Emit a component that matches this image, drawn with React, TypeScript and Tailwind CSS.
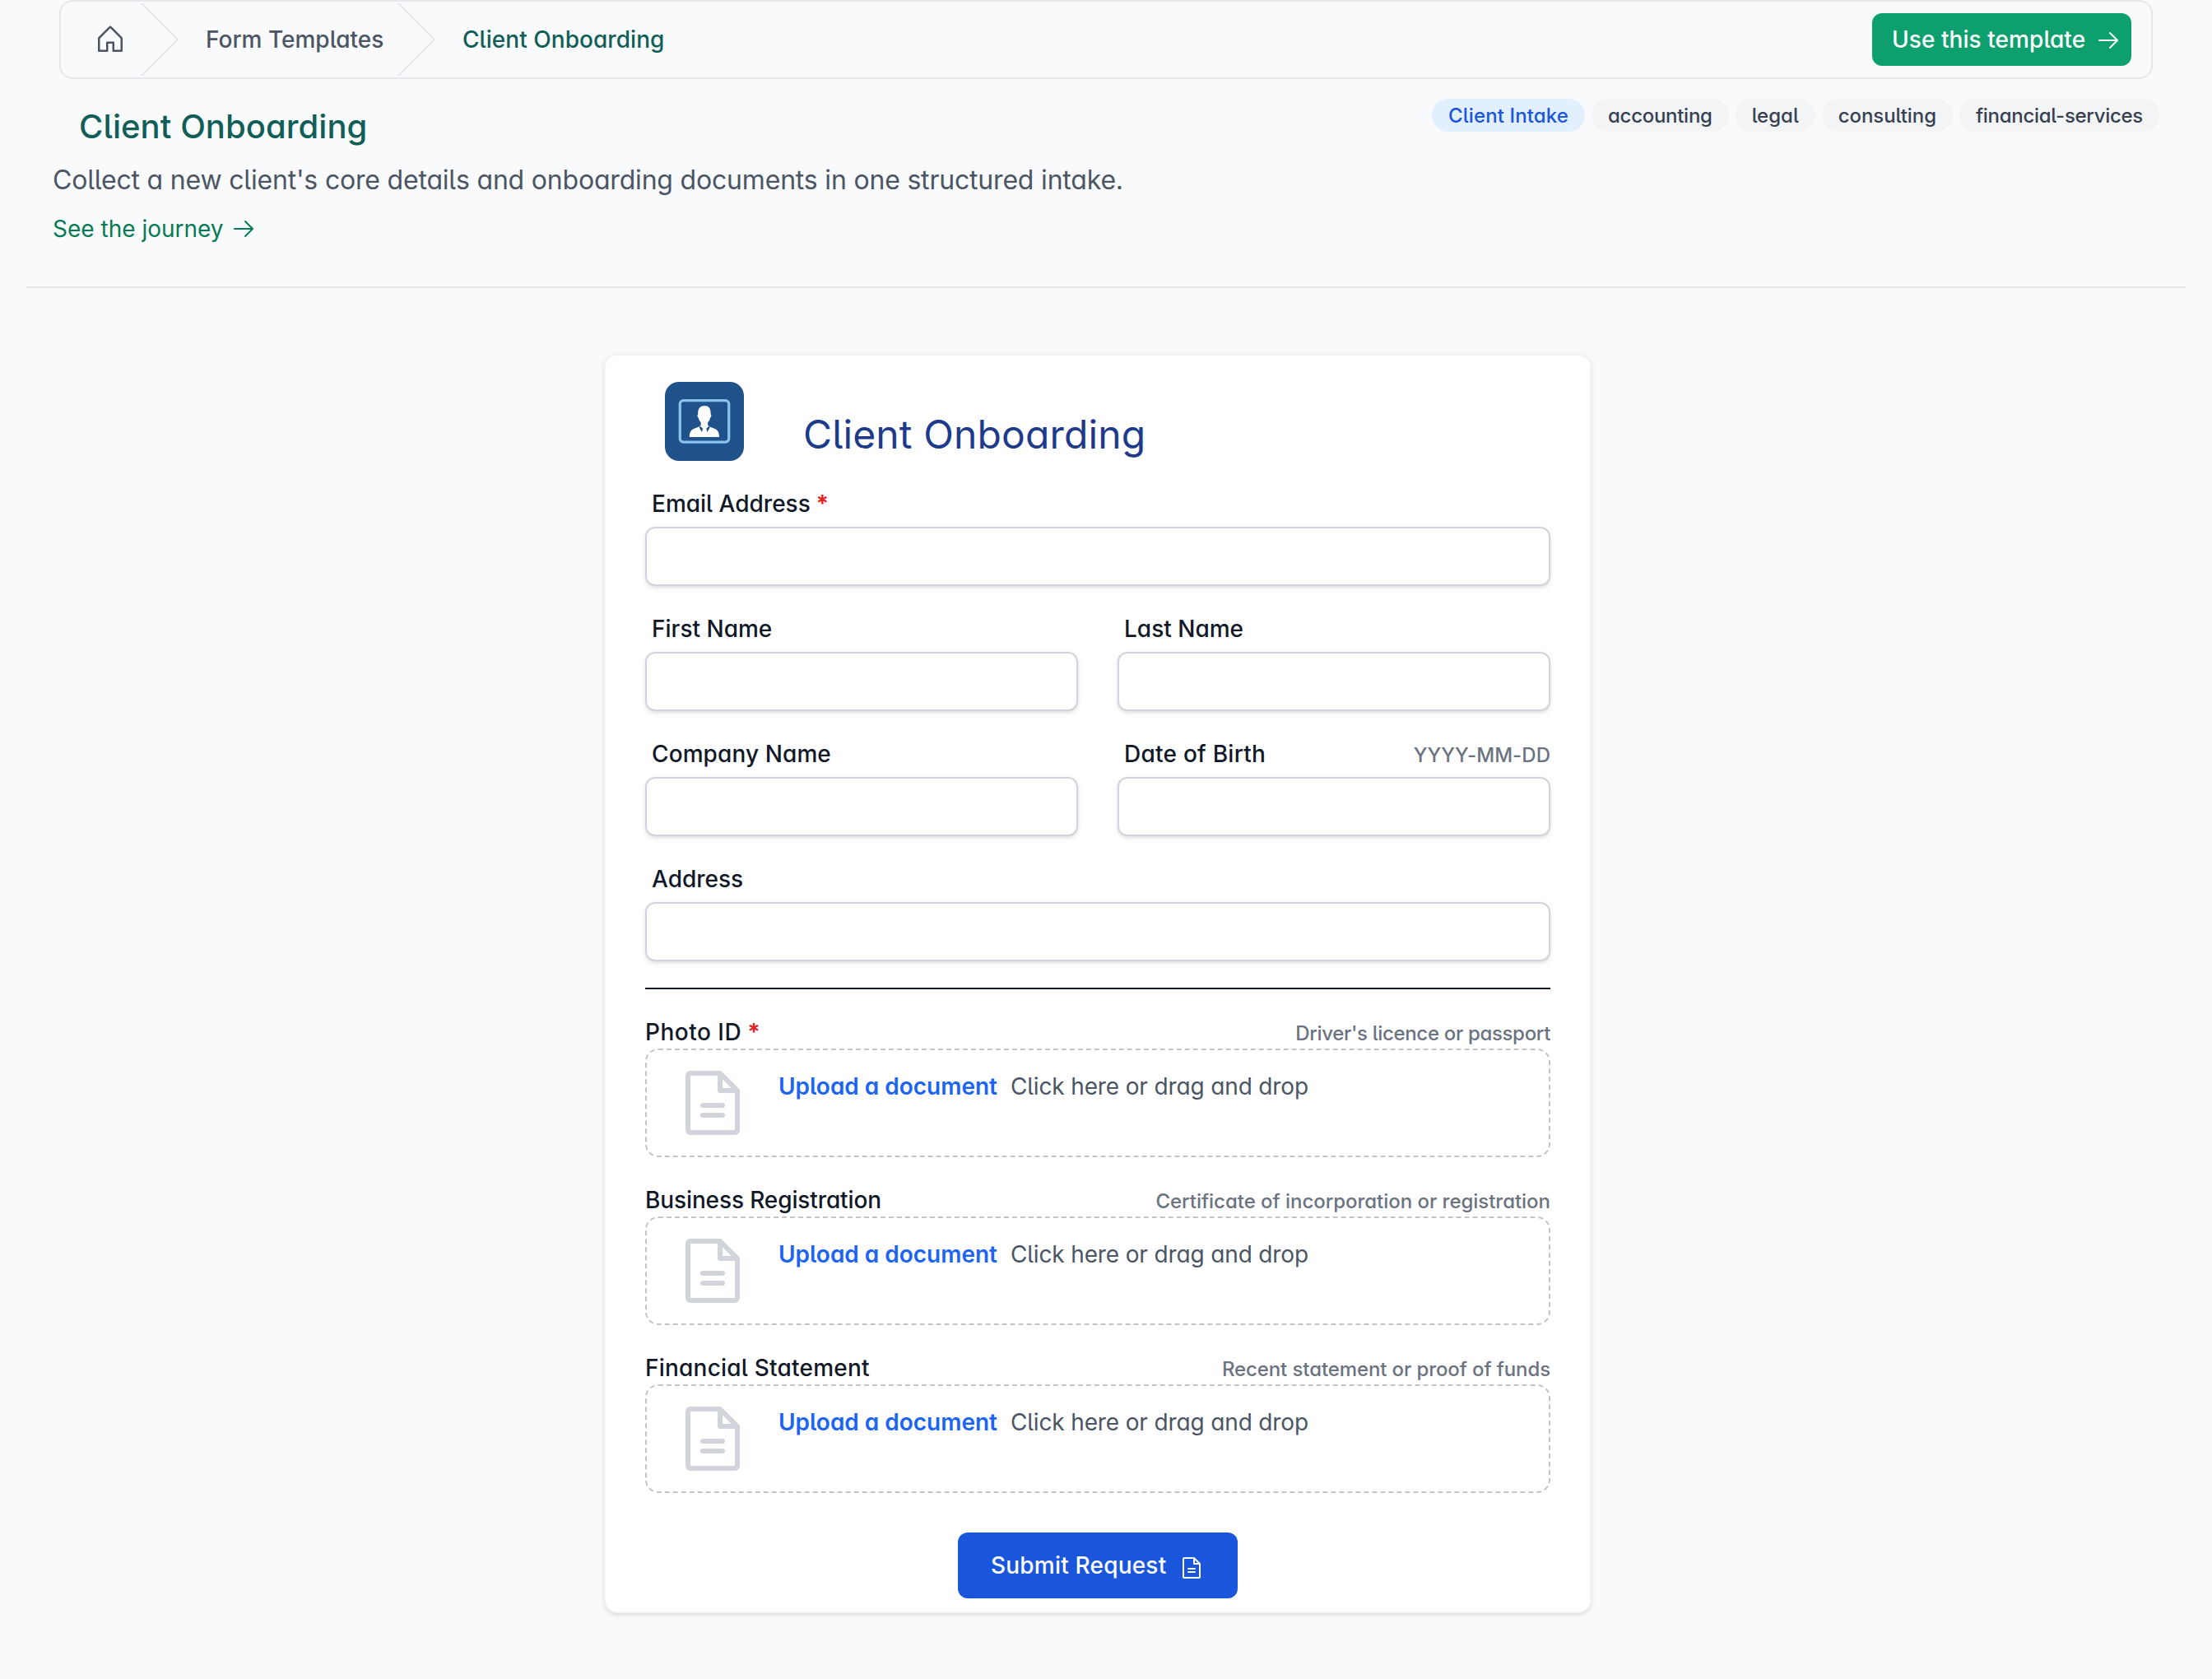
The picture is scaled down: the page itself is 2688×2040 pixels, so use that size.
import clsx from "clsx";
import { PiArrowRight, PiFileText, PiHouse } from "react-icons/pi";

interface IFieldProps {
  label: string;
  tracking?: string;
  required?: boolean;
  hint?: string;
}

interface IUploadProps extends IFieldProps {
  hint: string;
  hintTracking: string;
}

const tags = [
  { label: "Client Intake", className: "bg-[#e1effe] text-[#1a56db] tracking-[0.12px]" },
  { label: "accounting", className: "bg-gray-100 text-[#374151] tracking-[-0.28px]" },
  { label: "legal", className: "bg-gray-100 text-[#374151]" },
  { label: "consulting", className: "bg-gray-100 text-[#374151] tracking-[-0.08px]" },
  { label: "financial-services", className: "bg-gray-100 text-[#374151] tracking-[-0.29px]" },
];

const uploads: IUploadProps[] = [
  {
    label: "Photo ID",
    tracking: "tracking-[0.5px]",
    required: true,
    hint: "Driver's licence or passport",
    hintTracking: "tracking-[-0.33px]",
  },
  {
    label: "Business Registration",
    tracking: "tracking-[-0.12px]",
    hint: "Certificate of incorporation or registration",
    hintTracking: "tracking-[-0.03px]",
  },
  {
    label: "Financial Statement",
    tracking: "tracking-[0.22px]",
    hint: "Recent statement or proof of funds",
    hintTracking: "tracking-[-0.1px]",
  },
];

function Chevron() {
  return (
    <svg className="h-[88px] w-12 shrink-0 text-[#e5e7eb]" viewBox="0 0 24 44" fill="currentColor">
      <path d="M.293 0l22 22-22 22h1.414l22-22-22-22H.293z" />
    </svg>
  );
}

function Logo() {
  return (
    <svg className="size-24 shrink-0" viewBox="0 0 96 96">
      <rect width="96" height="96" rx="17" fill="#1f528b" />
      <rect x="18.3" y="22.7" width="59.4" height="50.4" rx="4" fill="none" stroke="#8ac2ec" strokeWidth="3.3" />
      <path
        fill="#fff"
        d="M48.5 29c-5.6 0-8.7 3.6-8.3 10.2-1.2.4-.9 3.4.5 4.2.5 2.6 1.7 4.6 3 6v3.1c-1.2 1.5-3.2 2.4-6.2 3.4-5.4 1.9-7.7 4.1-7.7 11.1h36.2c0-7-2.3-9.2-7.700-11.100-3-1-5-1.900-6.200-3.400v-3.100c1.300-1.400 2.500-3.400 3-6 1.400-.8 1.700-3.800.5-4.200.4-6.600-2.300-10.200-7.100-10.200z"
      />
      <path fill="#1f528b" d="M42.6 53.5l3.5 3.2-1.1 4.3-3.3-5.5zM53.8 53.5l-3.5 3.2 1.1 4.3 3.3-5.5z" />
    </svg>
  );
}

function Label({ label, tracking, required }: IFieldProps) {
  return (
    <span className={clsx("text-[28px] font-medium text-[#111827]", tracking)}>
      {label}
      {required && <span className="font-bold text-[#e02424]"> *</span>}
    </span>
  );
}

function Hint({ text, tracking }: { text: string; tracking: string }) {
  return <span className={clsx("pt-1 text-2xl font-medium leading-9 text-[#6b7280]", tracking)}>{text}</span>;
}

function Field({ label, tracking, required, hint }: IFieldProps) {
  return (
    <div className="flex flex-1 flex-col gap-2">
      <div className="flex h-10 items-center justify-between pl-2 leading-10">
        <Label label={label} tracking={tracking} required={required} />
        {hint && <Hint text={hint} tracking="tracking-[0.05px]" />}
      </div>
      <input className="h-[72px] w-full rounded-xl border-2 border-[#d1d5db] bg-white px-4 shadow-[0_2px_6px_rgba(0,0,0,0.1),0_2px_4px_-2px_rgba(0,0,0,0.1)]" />
    </div>
  );
}

function Upload({ label, tracking, required, hint, hintTracking }: IUploadProps) {
  return (
    <div>
      <div className="flex h-10 items-center justify-between leading-10">
        <Label label={label} tracking={tracking} required={required} />
        <Hint text={hint} tracking={hintTracking} />
      </div>
      <div className="flex h-[132px] gap-8 rounded-2xl border-2 border-dashed border-[#c3c4c8] pl-8 pt-4">
        <PiFileText className="size-24 text-[#d1d5db]" />
        <p className="flex gap-4 pt-2 text-[28px] leading-10">
          <span className="font-semibold tracking-[-0.02px] text-[#1c64f2]">Upload a document</span>
          <span className="tracking-[-0.14px] text-[#4b5563]">Click here or drag and drop</span>
        </p>
      </div>
    </div>
  );
}

export default function App() {
  return (
    <div className="h-[2040px] w-[2688px] overflow-hidden bg-[#f9fafb] px-8 font-['Inter',sans-serif] [font-feature-settings:'cv05','cv11']">
      <nav className="mx-10 flex h-24 items-center rounded-2xl border-2 border-[#e5e7eb] pl-10 pr-6 text-[28px] font-medium leading-10">
        <PiHouse className="mr-4 size-10 text-[#4b5563]" />
        <Chevron />
        <span className="ml-8 mr-4 w-[216px] whitespace-nowrap text-[#4b5563]">Form Templates</span>
        <Chevron />
        <span className="ml-8 tracking-[0.05px] text-[#115e59]">Client Onboarding</span>
        <button className="ml-auto flex h-16 w-[315px] items-center justify-between rounded-xl bg-[#0e9f6e] pl-6 pr-3 tracking-[0.06px] text-white">
          Use this template
          <PiArrowRight className="mt-0.5 size-8" />
        </button>
      </nav>

      <header className="flex h-[254px] justify-between border-b-2 border-[#e5e7eb] px-8">
        <div className="flex flex-col items-start pt-[30px]">
          <h1 className="pl-8 text-[40px] font-medium leading-[56px] tracking-[0.06px] text-[#115e59]">
            Client Onboarding
          </h1>
          <p className="mt-[9px] text-[32px] leading-[56px] tracking-[-0.19px] text-[#4b5563]">
            Collect a new client's core details and onboarding documents in one structured intake.
          </p>
          <a className="mt-[11px] flex items-center gap-2 text-[28px] leading-10 text-[#057a55]">
            See the journey
            <PiArrowRight className="size-8" />
          </a>
        </div>
        <div className="flex gap-2 pt-6">
          {tags.map((tag) => (
            <span
              key={tag.label}
              className={clsx("h-10 rounded-full px-5 text-2xl font-medium leading-[41px]", tag.className)}
            >
              {tag.label}
            </span>
          ))}
        </div>
      </header>

      <main className="ml-[702px] mt-20 h-[1530px] w-[1200px] rounded-2xl border-2 border-[#f3f4f6] bg-white px-12 pt-8 shadow-[0_2px_6px_rgba(0,0,0,0.1),0_2px_4px_-2px_rgba(0,0,0,0.1)]">
        <div className="flex h-24 gap-[72px] pl-6">
          <Logo />
          <h2 className="pt-8 text-[48px] leading-[64px] tracking-[0.12px] text-[#1e3a8a]">Client Onboarding</h2>
        </div>
        <div className="mt-8 flex flex-col gap-8">
          <Field label="Email Address" required />
          <div className="flex gap-12">
            <Field label="First Name" />
            <Field label="Last Name" />
          </div>
          <div className="flex gap-12">
            <Field label="Company Name" tracking="tracking-[0.1px]" />
            <Field label="Date of Birth" tracking="tracking-[0.25px]" hint="YYYY-MM-DD" />
          </div>
          <Field label="Address" />
          <hr className="border-t-2 border-[#111827]" />
          {uploads.map((upload) => (
            <Upload key={upload.label} {...upload} />
          ))}
        </div>
        <button className="mx-auto mt-12 flex h-20 w-[340px] items-center rounded-xl bg-[#1a56db] pl-10 text-[28px] font-medium tracking-[0.2px] text-white">
          Submit Request
          <PiFileText className="ml-[15px] mt-[6px] size-8" />
        </button>
      </main>
    </div>
  );
}
